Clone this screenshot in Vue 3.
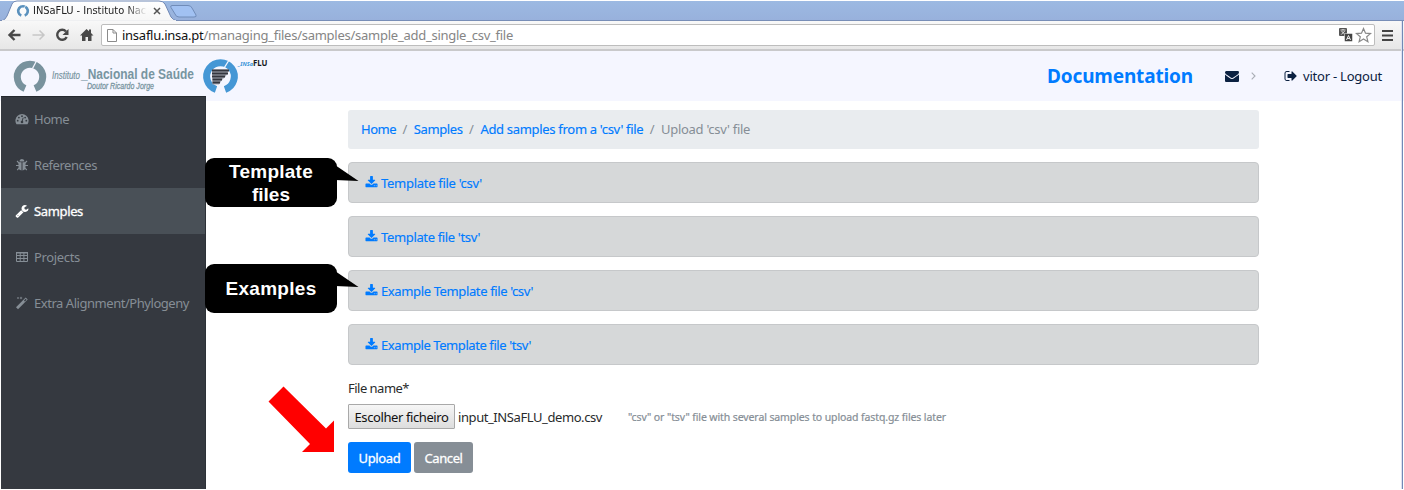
<script setup>
// Spreads a label's letters so that it takes the given width in pixels.
const vFit = {
  mounted(el, { value }) {
    const natural = el.getBoundingClientRect().width
    el.style.letterSpacing = `${(value - natural) / el.textContent.length}px`
  },
}

const menu = [
  { label: 'Home', icon: 'gauge', width: 35 },
  { label: 'References', icon: 'bug', width: 63 },
  { label: 'Samples', icon: 'wrench', width: 49, active: true },
  { label: 'Projects', icon: 'table', width: 46 },
  { label: 'Extra Alignment/Phylogeny', icon: 'magic', width: 155 },
]

const crumbs = [
  { label: 'Home', width: 35 },
  { label: 'Samples', width: 49 },
  { label: "Add samples from a 'csv' file", width: 163 },
]

const downloads = [
  { label: "Template file 'csv'", width: 101 },
  { label: "Template file 'tsv'", width: 99 },
  { label: "Example Template file 'csv'", width: 152 },
  { label: "Example Template file 'tsv'", width: 150 },
]
</script>

<template>
  <div class="window">
    <div class="tabstrip">
      <svg class="tab-shape" width="210" height="21" viewBox="0 0 210 21">
        <defs>
          <linearGradient id="tabfill" x1="0" y1="0" x2="0" y2="1">
            <stop offset="0" stop-color="#fff" /><stop offset="1" stop-color="#f6f6f6" />
          </linearGradient>
        </defs>
        <path d="M2 21Q5 20 7 16L12 4Q13 1 17 1H159Q163 1 165 4L171 17Q173 20 177 21Z" fill="url(#tabfill)" stroke="#7189b5" />
        <path d="M172 5.500H188Q191 5.500 192 8L196 15Q197 17 194 17H179Q176 17 175 14L171 7.500Q170 5.500 172 5.500Z" fill="#a1c1f2" stroke="#708cb9" />
        <path d="M2 20.600H176" stroke="#f6f6f6" />
      </svg>
      <div class="tab">
        <svg width="14" height="14" viewBox="0 0 14 14"><path d="M5.300 11.500A4.800 4.800 0 1 1 8.700 11.500" fill="none" stroke="#5a91bd" stroke-width="2.600" /><path d="M8 4.500L10.500 0" stroke="#fff" stroke-width=".7" /></svg>
        <span class="tab-title"><span v-fit="116">INSaFLU - Instituto Naci</span></span>
        <svg width="8" height="8" viewBox="0 0 8 8"><path d="M1 1L7 7M7 1L1 7" stroke="#555" stroke-width="1.500" /></svg>
      </div>
    </div>

    <div class="toolbar">
      <svg width="96" height="16" viewBox="0 0 96 16" fill="none" stroke="#494949" stroke-width="2.400">
        <path d="M14.500 8H4M8.500 3L3.500 8L8.500 13" />
        <path d="M26.500 8H38M33.500 3.500L38 8L33.500 12.500" stroke="#c7c7c7" stroke-width="1.500" />
        <path d="M60 4.500A5 5 0 1 0 60.700 10" />
        <path d="M62.500 2V8H56.500Z" fill="#494949" stroke="none" />
        <path d="M74 8.500L80.500 2L83 4.300V2.500H85V6L87.500 8.500H85.500V14H82V10H79.500V14H76V8.500Z" fill="#494949" stroke="none" />
      </svg>
      <div class="address">
        <svg width="10" height="13" viewBox="0 0 10 13" fill="#fff" stroke="#8b8b8b"><path d="M.5 .5H6L9.500 4V12.500H.5ZM6 .5V4H9.500" /></svg>
        <span v-fit="391" class="url"><b>insaflu.insa.pt</b>/managing_files/samples/sample_add_single_csv_file</span>
        <svg class="page-actions" width="34" height="16" viewBox="0 0 34 16">
          <rect x="1" y="1" width="8" height="8" rx="1" fill="#555" />
          <path d="M2.500 3H7.500M5 2V3M3.300 7.500L6.700 4M3.500 4L7 7.500" stroke="#fff" stroke-width=".8" fill="none" />
          <rect x="6.500" y="6.500" width="8" height="8" rx="1" fill="#444" stroke="#fff" stroke-width=".5" />
          <path d="M8.500 13L10.500 8.500L12.500 13M9.300 11.500H11.700" stroke="#fff" stroke-width=".9" fill="none" />
          <path d="M25.500 1.500L27.500 6.200L32.500 6.600L28.700 9.800L29.900 14.700L25.500 12L21.100 14.700L22.300 9.800L18.500 6.600L23.500 6.200Z" fill="#fff" stroke="#888" stroke-width="1.200" />
        </svg>
      </div>
      <svg class="burger" width="11" height="12" viewBox="0 0 11 12"><path d="M0 2H11M0 6.500H11M0 11H11" stroke="#444" stroke-width="2" /></svg>
    </div>

    <header class="header">
      <svg class="logo" width="270" height="46" viewBox="0 0 270 46">
        <path d="M25 37.500A12.700 12.700 0 1 1 35 37.500" fill="none" stroke="#78929d" stroke-width="7" />
        <path d="M32.500 17.500L37.500 8" stroke="#f5f6ff" stroke-width="1.300" />
        <g font-family="'Liberation Sans', Arial, sans-serif" fill="#7895a1">
          <text x="52" y="28" font-size="10" font-style="italic" stroke="#7895a1" stroke-width=".2" textLength="28" lengthAdjust="spacingAndGlyphs">Instituto</text>
          <text x="81" y="28" font-size="14" font-weight="bold" textLength="113" lengthAdjust="spacingAndGlyphs">_Nacional de Saúde</text>
          <text x="87" y="38" font-size="9" font-style="italic" stroke="#7895a1" stroke-width=".3" textLength="67" lengthAdjust="spacingAndGlyphs">Doutor Ricardo Jorge</text>
        </g>
        <path d="M216 38.500A13.800 13.800 0 1 1 225 38.500" fill="none" stroke="#4597d5" stroke-width="7" />
        <path d="M223.500 18L230 7.500" stroke="#f5f6ff" stroke-width="1.300" />
        <path d="M212 18.500H229L226 25L222 29L219 33.500H212.500Z" fill="#a5a8b4" />
        <path d="M212 19.500H229M212 22.500H228M212 25.500H225M212.500 28.500H222M212.500 31.500H220" stroke="#34363f" stroke-width="1.900" />
        <g font-family="'Noto Sans', sans-serif" font-weight="bold">
          <text x="238" y="15" font-size="5.500" font-style="italic" fill="#3995d8" textLength="15" lengthAdjust="spacingAndGlyphs">_INSa</text>
          <text x="253" y="14.500" font-size="9.500" fill="#171a22" textLength="14.500" lengthAdjust="spacingAndGlyphs">FLU</text>
        </g>
      </svg>
      <nav class="account">
        <a class="docs"><span v-fit="146">Documentation</span></a>
        <svg class="mail" width="14" height="14" viewBox="0 0 1792 1792"><path d="M1792 710v794q0 66-47 113t-113 47h-1472q-66 0-113-47t-47-113v-794q44 49 101 87 362 246 497 345 57 42 92.500 65.500t94.500 48 110 24.500h2q51 0 110-24.500t94.500-48 92.500-65.500q170-123 498-345 57-39 100-87zm0-294q0 79-49 151t-122 123q-376 261-468 325-10 7-42.500 31t-54 38.500-52 32.500-57.500 27-50 9h-2q-23 0-50-9t-57.500-27-52-32.500-54-38.500-42.500-31q-91-64-262-182.500t-205-142.500q-62-42-117-115.500t-55-136.500q0-78 41.500-130t118.500-52h1472q65 0 112.500 47t47.500 113z" fill="#0b2141" /></svg>
        <svg class="chevron" width="5" height="8" viewBox="0 0 5 8"><path d="M.7 .7L4 4L.7 7.300" fill="none" stroke="#a9adb5" stroke-width="1.100" /></svg>
        <svg class="exit" width="14" height="14" viewBox="0 0 1792 1792"><path d="M704 1440q0 4 1 20t.5 26.500-3 23.500-10 19.500-20.500 6.500h-320q-119 0-203.500-84.500t-84.500-203.500v-704q0-119 84.500-203.500t203.500-84.500h320q13 0 22.500 9.500t9.500 22.500q0 4 1 20t.5 26.500-3 23.500-10 19.500-20.500 6.500h-320q-66 0-113 47t-47 113v704q0 66 47 113t113 47h312l11.500 1 11.500 3 8 5.500 7 9 2 13.500zm928-544q0 26-19 45l-544 544q-19 19-45 19t-45-19-19-45v-288h-448q-26 0-45-19t-19-45v-384q0-26 19-45t45-19h448v-288q0-26 19-45t45-19 45 19l544 544q19 19 19 45z" fill="#0b2141" /></svg>
        <span v-fit="79">vitor - Logout</span>
      </nav>
    </header>

    <div class="body">
      <aside class="sidebar">
        <a v-for="item in menu" :key="item.label" class="menu-item" :class="{ active: item.active }">
          <svg v-if="item.icon === 'gauge'" width="14" height="14" viewBox="0 0 14 14">
            <path d="M1.500 12.300A6.600 6.600 0 1 1 12.500 12.300Z" fill="currentColor" />
            <g fill="#343a40"><circle cx="2.700" cy="8.700" r=".9" /><circle cx="3.900" cy="5.600" r=".9" /><circle cx="7" cy="4.200" r=".9" /><circle cx="10.100" cy="5.600" r=".9" /><circle cx="11.300" cy="8.700" r=".9" /></g>
            <path d="M8.200 5.700L7.200 9" stroke="#343a40" /><circle cx="7" cy="10" r="1.300" fill="#343a40" />
          </svg>
          <svg v-else-if="item.icon === 'bug'" width="14" height="14" viewBox="0 0 14 14">
            <path d="M4.500 3.500A2.500 2.500 0 0 1 9.500 3.500ZM3.500 4.300H6.500V12.500Q3.500 12 3.500 9ZM7.500 4.300H10.500V9Q10.500 12 7.500 12.500Z" fill="currentColor" />
            <path d="M2 3L4.500 5.500M12 3L9.500 5.500M1 7.500H4M13 7.500H10M2.200 12L4.500 9.700M11.800 12L9.500 9.700" stroke="currentColor" stroke-width="1.100" />
          </svg>
          <svg v-else-if="item.icon === 'wrench'" width="14" height="14" viewBox="0 0 1792 1792"><path d="M448 1472q0-26-19-45t-45-19-45 19-19 45 19 45 45 19 45-19 19-45zm644-420l-682 682q-37 37-90 37-52 0-91-37l-106-108q-38-36-38-90 0-53 38-91l681-681q39 98 114.500 173.500t173.500 114.500zm634-435q0 39-23 106-47 134-164.500 217.500t-258.500 83.500q-185 0-316.500-131.500t-131.500-316.500 131.500-316.500 316.500-131.500q58 0 121.500 16.500t107.500 46.500q16 11 16 28t-16 28l-293 169v224l193 107q5-3 79-48.500t135.500-81 70.500-35.500q15 0 23.500 10t8.500 25z" fill="currentColor" /></svg>
          <svg v-else-if="item.icon === 'table'" width="14" height="14" viewBox="0 0 14 14">
            <path d="M1.500 2.500H12.500V11.500H1.500ZM1 5.500H13M1 8.500H13M5.200 3V12M8.900 3V12" fill="none" stroke="currentColor" /><path d="M1 2H13V3.500H1Z" fill="currentColor" />
          </svg>
          <svg v-else width="14" height="14" viewBox="0 0 14 14">
            <path d="M1 11.300L10.700 1.600L12.700 3.600L3 13.300Z" fill="currentColor" /><path d="M9 4.600L9.900 5.500L11.600 3.700L10.700 2.800Z" fill="#343a40" />
            <path d="M3 1.200V2.800M2.200 2H3.800M6 .8V3.200M4.800 2H7.200" stroke="currentColor" stroke-width=".8" />
          </svg>
          <span v-fit="item.width">{{ item.label }}</span>
        </a>
      </aside>

      <main class="content">
        <div class="breadcrumb">
          <template v-for="c in crumbs" :key="c.label">
            <a v-fit="c.width">{{ c.label }}</a><i>/</i>
          </template>
          <span v-fit="89">Upload 'csv' file</span>
        </div>
        <div v-for="d in downloads" :key="d.label" class="card">
          <svg width="13" height="13" viewBox="0 0 1792 1792"><path d="M1344 1344q0-26-19-45t-45-19-45 19-19 45 19 45 45 19 45-19 19-45zm256 0q0-26-19-45t-45-19-45 19-19 45 19 45 45 19 45-19 19-45zm128-224v320q0 40-28 68t-68 28h-1472q-40 0-68-28t-28-68v-320q0-40 28-68t68-28h465l135 136q58 56 136 56t136-56l136-136h464q40 0 68 28t28 68zm-325-569q17 41-14 70l-448 448q-18 19-45 19t-45-19l-448-448q-31-29-14-70 17-39 59-39h256v-448q0-26 19-45t45-19h256q26 0 45 19t19 45v448h256q42 0 59 39z" fill="currentColor" /></svg>
          <a v-fit="d.width">{{ d.label }}</a>
        </div>
        <div class="field-label"><span v-fit="61">File name*</span></div>
        <div class="file-row">
          <span class="choose"><span v-fit="94">Escolher ficheiro</span></span>
          <span v-fit="144" class="filename">input_INSaFLU_demo.csv</span>
          <span v-fit="318" class="help">"csv" or "tsv" file with several samples to upload fastq.gz files later</span>
        </div>
        <div class="actions">
          <span class="btn primary"><span v-fit="42">Upload</span></span>
          <span class="btn secondary"><span v-fit="38">Cancel</span></span>
        </div>
      </main>
    </div>

    <div class="callout first">
      <svg width="24" height="18" viewBox="0 0 24 18"><path d="M0 1L23.500 17L0 16Z" /></svg>
      <span v-fit="84">Template</span><span v-fit="38">files</span>
    </div>
    <div class="callout second">
      <svg width="24" height="18" viewBox="0 0 24 18"><path d="M0 1L23.500 17L0 16Z" /></svg>
      <span v-fit="91">Examples</span>
    </div>
    <svg class="arrow" width="67" height="67" viewBox="0 0 67 67"><path d="M15.500 .5L58 42.500L66 34.500V66H34L42 58L.5 15.500Z" fill="#f00" /></svg>
  </div>
</template>

<style>
body { margin: 0; background: #fff; overflow: hidden; }
</style>

<style scoped>
.window {
  position: relative;
  box-sizing: border-box;
  width: 1404px;
  height: 490px;
  display: flex;
  flex-direction: column;
  font: 13px/18px "Noto Sans", "Open Sans", sans-serif;
  color: #292b2c;
  background: #fff;
  white-space: nowrap;
  overflow: hidden;
}
.window::after {
  content: "";
  position: absolute;
  top: 21px;
  right: 1px;
  bottom: 1px;
  width: 1px;
  background: #7189b6;
  box-shadow: -1px 0 #dde1f0;
}
svg { display: block; flex: none; }
.tabstrip {
  position: relative;
  box-sizing: border-box;
  height: 21px;
  flex: none;
  background: linear-gradient(#9cb9e2, #98b1dc);
  border-top: 1px solid #fff;
  border-bottom: 1px solid #788eb7;
}
.tab-shape { position: absolute; left: 0; top: -1px; }
.tab {
  position: relative;
  display: flex;
  align-items: center;
  height: 20px;
  padding-left: 16px;
  gap: 3px;
  font: 11px/18px "DejaVu Sans Condensed", "DejaVu Sans", sans-serif;
  color: #222;
}
.tab-title {
  width: 114px;
  margin-right: 3px;
  overflow: hidden;
  -webkit-mask-image: linear-gradient(90deg, #000 82%, transparent);
  mask-image: linear-gradient(90deg, #000 82%, transparent);
}
.toolbar {
  box-sizing: border-box;
  flex: none;
  height: 30px;
  display: flex;
  align-items: center;
  padding: 2px 10px 2px 6px;
  background: linear-gradient(#f8f8f8, #e7e7e7);
  border-bottom: 2px solid #c9c9cb;
}
.address {
  box-sizing: border-box;
  width: 1274px;
  height: 22px;
  display: flex;
  align-items: center;
  gap: 5px;
  padding: 0 2px 0 5px;
  margin-left: -1px;
  background: #fff;
  border: 1px solid #bdbdbd;
  border-radius: 2px;
}
.url {
  font: 13px/18px "Noto Sans", sans-serif;
  color: #858585;
}
.url b { font-weight: 400; color: #111; }
.page-actions { margin-left: auto; }
.burger { margin-left: 7px; }
.header {
  flex: none;
  height: 50px;
  display: flex;
  justify-content: space-between;
  background: #f5f6ff;
}
.account {
  display: flex;
  align-items: center;
  padding-right: 22px;
  height: 50px;
  color: #0b2141;
}
.docs { font-size: 19px; font-weight: 700; color: #007bff; line-height: 24px; }
.mail { margin-left: 32px; }
.chevron { margin-left: 12px; }
.exit { margin: 0 5px 0 28px; }
.body { flex: 1; display: flex; min-height: 0; }
.sidebar {
  position: relative;
  width: 205px;
  height: 393px;
  margin: -5px 0 0 1px;
  box-sizing: border-box;
  border-top: 1px solid #25292e;
  border-right: 1px solid #2c3137;
  background: #353940;
}
.menu-item {
  display: flex;
  align-items: center;
  height: 46px;
  padding-left: 14px;
  gap: 5px;
}
.menu-item:first-child { margin-top: -1px; }
.content { width: 911px; padding: 9px 0 0 142px; }
.breadcrumb {
  display: flex;
  align-items: center;
  height: 39px;
  box-sizing: border-box;
  padding: 0 0 1px 13px;
  margin-bottom: 13px;
  background: #e9ecef;
  border-radius: 3px;
  color: #868e96;
}
.breadcrumb i { font-style: normal; width: 17.7px; text-align: center; }
a { color: #007bff; }
.menu-item { color: #868e96; }
.menu-item.active { color: #fff; background: #495057; -webkit-text-stroke: .3px currentColor; }
.card {
  box-sizing: border-box;
  height: 41px;
  display: flex;
  align-items: center;
  gap: 3px;
  padding-left: 16px;
  margin-bottom: 13px;
  background: #d6d8d9;
  border: 1px solid #c6c8ca;
  border-radius: 4px;
  color: #007bff;
}
.breadcrumb a, .card a { -webkit-text-stroke: .15px currentColor; }
.field-label { height: 18px; margin-top: 14px; }
.file-row { display: flex; align-items: center; height: 25px; margin-top: 7px; }
.choose, .btn {
  box-sizing: border-box;
  display: flex;
  justify-content: center;
  align-items: center;
}
.choose {
  width: 107px;
  height: 25px;
  border: 1px solid #a9a9a9;
  background: linear-gradient(#f6f6f6, #dddddd);
  color: #111;
  border-radius: 1px;
}
.filename { margin-left: 3px; }
.help { margin-left: 26px; font-size: 10.5px; color: #868e96; -webkit-text-stroke: .2px currentColor; }
.actions { display: flex; gap: 3px; margin-top: 13px; }
.btn { height: 31px; border-radius: 3px; color: #fff; -webkit-text-stroke: .3px currentColor; }
.primary { width: 63px; background: #007bff; }
.secondary { width: 59px; background: #868e96; }
.callout {
  position: absolute;
  left: 205px;
  width: 132px;
  height: 49px;
  display: flex;
  flex-direction: column;
  align-items: center;
  justify-content: center;
  border-radius: 9px;
  background: #000;
  color: #fff;
  font: 700 19px/23px "Liberation Sans", Arial, sans-serif;
}
.callout svg { position: absolute; left: 130px; top: 6px; }
.first { top: 158px; }
.second { top: 264px; }
.arrow { position: absolute; left: 268px; top: 386px; }
</style>
